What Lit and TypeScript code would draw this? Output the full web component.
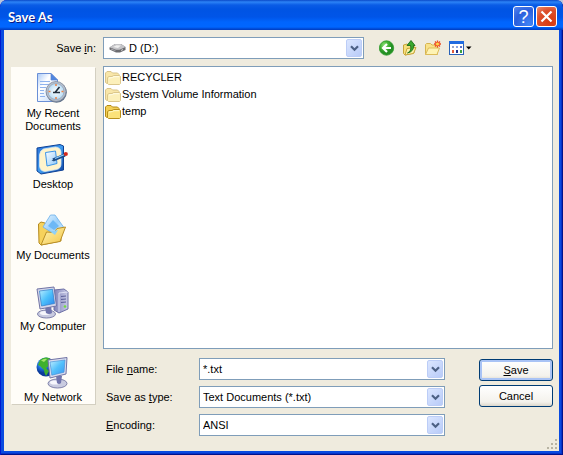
import { LitElement, html, css, svg, nothing } from "lit";
import { customElement, property } from "lit/decorators.js";

const placeIcons: Record<string, unknown> = {
  recent: svg`
    <defs>
      <linearGradient id="page" x1="0" y1="0" x2="1" y2="1"><stop offset="0" stop-color="#a9c9f7"/><stop offset=".35" stop-color="#fff"/><stop offset="1" stop-color="#bcd5fa"/></linearGradient>
      <radialGradient id="dial"><stop offset="0" stop-color="#fff"/><stop offset="1" stop-color="#b9ddf6"/></radialGradient>
    </defs>
    <path d="M0.5 1.5H14L20.5 8V29.5H0.5Z" fill="url(#page)" stroke="#6a8fd6"/>
    <path d="M14 1.5V8H20.5Z" fill="#4f86e0" stroke="#5a82cf" stroke-width=".7"/>
    <path d="M3 9.5H13M3 12.5H12M3 15.5H9M3 18.5H7M3 21.5H7M3 24.5H8" stroke="#8fb3ee"/>
    <circle cx="19.5" cy="20.5" r="10.3" fill="#5f7088"/>
    <circle cx="19" cy="19.5" r="10" fill="#b9c0cc" stroke="#7e8a9e" stroke-width=".8"/>
    <circle cx="19" cy="19.5" r="8" fill="url(#dial)" stroke="#8fa0b8" stroke-width=".7"/>
    <path d="M19 12v2M19 25v2M11.5 19.5h2M24.500 19.5h2" stroke="#f08040" stroke-width="1.5"/>
    <path d="M22.5 15L18 20.5M16 20.5H23" stroke="#22303f" stroke-width="1.6"/>`,
  desktop: svg`
    <defs>
      <linearGradient id="pad" x1="0" y1="0" x2="1" y2="1"><stop offset="0" stop-color="#2a72d8"/><stop offset=".5" stop-color="#3f9cf0"/><stop offset="1" stop-color="#0c3f9e"/></linearGradient>
      <linearGradient id="sheet" x1="0" y1="0" x2="1" y2="1"><stop offset="0" stop-color="#fff"/><stop offset="1" stop-color="#8cc8fa"/></linearGradient>
    </defs>
    <path d="M0 5L23 1.5L26.5 3V27L4 31L0 28Z" fill="url(#pad)" stroke="#0f4296"/>
    <path d="M6.500 6L18.500 4Q23.500 4.500 24 9V21Q24 25.500 19.500 26.500L8 28.500Q3 28 2.500 23V12Q3 7.500 6.500 6Z" fill="#fff4cc" stroke="#d9e6ee" stroke-width=".8"/>
    <path d="M8.5 9.5L18.5 8L20 20.500L10 23Z" fill="url(#sheet)" stroke="#3a94e8"/>
    <path d="M16 17L28 12" stroke="#174b8c" stroke-width="3"/>
    <path d="M18 15.5L27 11.8" stroke="#8fd0ff" stroke-width="1.2"/>
    <circle cx="28.8" cy="11" r="2.1" fill="#d52a1c"/>
    <path d="M14.5 18L18 15V18Z" fill="#26517f"/>`,
  documents: svg`
    <defs>
      <linearGradient id="flap" x1="0" y1="0" x2="1" y2="1"><stop offset="0" stop-color="#fff6b8"/><stop offset="1" stop-color="#f3c443"/></linearGradient>
      <linearGradient id="leaf" x1="0" y1="0" x2="1" y2="1"><stop offset="0" stop-color="#eaf6ff"/><stop offset=".5" stop-color="#9bd0fb"/><stop offset="1" stop-color="#d6eeff"/></linearGradient>
    </defs>
    <path d="M1.500 10L4 8L8 9L10 11.5L24 14V27L4 31L2 29Z" fill="#f6d25c" stroke="#b58a20"/>
    <path d="M13.500 1H18L26.5 13L20 22L6 13Z" fill="url(#leaf)" stroke="#6aaeea" stroke-width=".8"/>
    <path d="M11 12L16 6L22 12L17 16Z" fill="#6db8f6"/>
    <path d="M4 31L9.5 18L17 18.5L20 14.5L28.5 13L23 27.5Z" fill="url(#flap)" stroke="#b98f27"/>
    <path d="M13 17.500L21 16L18 21Z" fill="#8fd0f8"/>`,
  computer: svg`
    <defs>
      <linearGradient id="screen" x1="0" y1="0" x2="1" y2="1"><stop offset="0" stop-color="#bdeeff"/><stop offset=".5" stop-color="#4cc0fb"/><stop offset="1" stop-color="#2b86ee"/></linearGradient>
      <linearGradient id="tower" x1="0" x2="1"><stop offset="0" stop-color="#7f82b8"/><stop offset="1" stop-color="#c9cbe6"/></linearGradient>
    </defs>
    <path d="M17 5L27 4L31 7V24L22 28L17 25Z" fill="url(#tower)" stroke="#6d70a6"/>
    <path d="M22 8L31 7M22 8V27" stroke="#e2e4f6" stroke-width=".9"/>
    <path d="M24 11.5L29 11M24 14.5L29 14M24 17.5L29 17" stroke="#5b5f98"/>
    <circle cx="28" cy="21.5" r="1.3" fill="#6fdc3c"/>
    <ellipse cx="9.5" cy="29" rx="9" ry="4" fill="#c9cbe0" stroke="#7e80ab"/>
    <ellipse cx="8" cy="28" rx="5" ry="2" fill="#f6f6fc"/>
    <path d="M8 22L14 21L15 28Q12 30 9 28Z" fill="#7175ad"/>
    <path d="M0 4L17 2L19.500 21L3 24Z" fill="#d4d6ea" stroke="#7174a5"/>
    <path d="M2.5 6L15.500 4.3L17.500 18.5L4.5 21Z" fill="url(#screen)" stroke="#2f7bc7" stroke-width=".7"/>`,
  network: svg`
    <defs>
      <radialGradient id="globe" cx=".35" cy=".3"><stop offset="0" stop-color="#8ad2ff"/><stop offset=".6" stop-color="#1f70dc"/><stop offset="1" stop-color="#0b3a9a"/></radialGradient>
      <linearGradient id="lcd" x1="0" y1="0" x2="1" y2="1"><stop offset="0" stop-color="#c2efff"/><stop offset=".5" stop-color="#52c0fb"/><stop offset="1" stop-color="#3b96f2"/></linearGradient>
    </defs>
    <circle cx="9" cy="11" r="9.5" fill="url(#globe)"/>
    <path d="M3 4Q8 0 13 2.5L11 6L13 9L9 12L12 15L9 20Q7 17 7 14L3 10L1 9Z" fill="#3fb02e"/>
    <path d="M4 4.5Q7 2 10 3L7 6Z" fill="#a4e46a"/>
    <ellipse cx="20.5" cy="27.5" rx="9.5" ry="4.5" fill="#c9cbe0" stroke="#8183ab"/>
    <ellipse cx="18" cy="26.5" rx="5" ry="2" fill="#f7f7fd"/>
    <path d="M19 20H25L24 27Q22 29 20 27Z" fill="#7175ad"/>
    <path d="M11 4L30 1.5L29 18L13 22Z" fill="#dadcee" stroke="#7174a5"/>
    <path d="M13 6L28 4L27 16.2L14.800 19.2Z" fill="url(#lcd)" stroke="#4a93d8" stroke-width=".7"/>`,
};

const toolIcons: Record<string, unknown> = {
  back: svg`
    <defs><radialGradient id="green" cx=".35" cy=".3"><stop offset="0" stop-color="#8fe07a"/><stop offset=".6" stop-color="#42b234"/><stop offset="1" stop-color="#259024"/></radialGradient></defs>
    <circle cx="7.5" cy="8" r="7.2" fill="url(#green)" stroke="#2f9a2c" stroke-width=".8"/>
    <path d="M8 4L4 8L8 12M4.5 8H12" fill="none" stroke="#fff" stroke-width="2.2"/>`,
  up: svg`
    <path d="M1.5 5L5 4L7 5.5H12V13L3 15L1.5 13.5Z" fill="#f7e07c" stroke="#c8a437"/>
    <path d="M3 15L5 8.5L14 7.500L11.5 13.5Z" fill="#fdf2a8" stroke="#c8a437"/>
    <path d="M5.5 13Q10 11 8.500 5.5H5L9 0.5L13 5.5H11.500Q12 11.500 5.500 13Z" fill="#39a82e" stroke="#1b6e1a" stroke-width=".9"/>`,
  folder: svg`
    <path d="M0.5 4.5L1.5 3.5H5.500L7 5H12.500V14.5H0.5Z" fill="#f8e28a" stroke="#d6b450"/>
    <path d="M0.5 14.5L3.500 8H14.500L12 14.500Z" fill="#fef3b4" stroke="#dcbb58"/>
    <path d="M12.5 0.500V7.500M9 4H16M10 1.500L15 6.500M15 1.500L10 6.500" stroke="#ec4a20" stroke-width="1.300"/>
    <circle cx="12.5" cy="4" r="1.5" fill="#ffd94a"/>`,
  views: svg`
    <rect x=".5" y="1.5" width="14" height="13" fill="#fff" stroke="#2a62b8"/>
    <rect x="0" y="1" width="15" height="3" fill="#1f6be0"/>
    <path d="M3 7h2" stroke="#9aa8c8" stroke-width="2"/><path d="M7 7h2" stroke="#8aa4e0" stroke-width="2"/><path d="M11 7h2" stroke="#5a70c8" stroke-width="2"/>
    <path d="M3 11.5h2" stroke="#e05a3c" stroke-width="3"/><path d="M7 11.5h2" stroke="#20308c" stroke-width="3"/><path d="M11 11.5h2" stroke="#3ea040" stroke-width="3"/>
    <path d="M17 6.5h5.5l-2.750 3z" fill="#000"/>`,
};

const base = css`
  * { box-sizing: border-box; }
  svg { display: block; flex: none; }
  button, input, select { font: inherit; color: inherit; margin: 0; }
`;

/** White field with a drop-down arrow at its right end. */
@customElement("xp-combo")
export class XpCombo extends LitElement {
  @property() value = "";
  @property() label = "";
  @property({ type: Boolean }) editable = false;
  @property({ type: Boolean }) drive = false;

  static styles = [base, css`
    :host { display: block; min-width: 0; }
    .box { display: flex; align-items: center; height: 22px; padding: 1px; border: 1px solid #7f9db9; background: #fff; }
    .field { flex: 1; min-width: 0; width: 0; height: 18px; padding: 0 2px; border: 0; outline: 0; background: transparent; appearance: none; line-height: 18px; }
    .drive { margin: 0 1px 0 4px; }
    .arrow { flex: none; display: grid; place-items: center; width: 16px; height: 18px; padding: 0; border: 1px solid #bccdf7; border-radius: 2px; background: linear-gradient(135deg, #dbe6ff, #b8cbf8); }
  `];

  render() {
    return html`<div class="box">
      ${this.drive ? html`<svg class="drive" width="17" height="16" viewBox="0 0 17 16" aria-hidden="true">
        <path d="M0.5 7.5L6 4H12L16.5 7V10L11 12.500H7L0.5 9.5Z" fill="#6c6c70"/>
        <path d="M0.5 7.3L6 4H12L16.5 7L10.5 9.8H7Z" fill="#c4c4c8"/>
        <path d="M4 7L7.5 5.2L12 5.5L9 8Z" fill="#efefef"/>
        <path d="M2 9L6.5 10.7" stroke="#a8a8ac"/><path d="M12 10.5L14 9.5" stroke="#d0d0d0"/>
      </svg>` : nothing}
      ${this.editable
        ? html`<input class="field" type="text" aria-label=${this.label} .value=${this.value}>`
        : html`<select class="field" aria-label=${this.label}><option selected>${this.value}</option></select>`}
      <button class="arrow" type="button" tabindex="-1" aria-label="Show list">
        <svg width="9" height="7" viewBox="0 0 9 7"><path d="M1 1.2L4.5 4.7L8 1.2" fill="none" stroke="#4d6185" stroke-width="2.2"/></svg>
      </button>
    </div>`;
  }
}

@customElement("app-root")
export class AppRoot extends LitElement {
  private places = [
    { icon: "recent", text: "My Recent Documents" },
    { icon: "desktop", text: "Desktop" },
    { icon: "documents", text: "My Documents" },
    { icon: "computer", text: "My Computer" },
    { icon: "network", text: "My Network" },
  ];
  private files = [
    { name: "RECYCLER", hidden: true },
    { name: "System Volume Information", hidden: true },
    { name: "temp", hidden: false },
  ];
  private tools = [
    { id: "back", label: "Back", width: 16 },
    { id: "up", label: "Up one level", width: 16 },
    { id: "folder", label: "Create new folder", width: 17 },
    { id: "views", label: "Views", width: 23 },
  ];

  static styles = [base, css`
    :host { display: block; background: #b9c6dc; font: 11px/13px "Liberation Sans", Arial, sans-serif; color: #000; }
    .window { display: flex; flex-direction: column; min-height: 100vh; padding: 0 4px 4px; border-radius: 7px 7px 0 0; overflow: hidden;
      background: #0a4be0; box-shadow: inset 1px 0 #0019cf, inset -1px -1px #00138c, inset -2px -2px #0733c9; }
    .title { display: flex; align-items: center; gap: 2px; height: 30px; margin: 0 -4px; padding: 3px 6px 0 8px; border-radius: 7px 7px 0 0;
      background: linear-gradient(#0a49c8 0, #2c83f6 2px, #0a5ce6 5px, #0054e3 9px, #0055e8 17px, #0065fd 22px, #0066ff 27px, #0047d0 29px, #003cc0 30px); }
    h1 { flex: 1; margin: 0; font: bold 13px/16px Lato, sans-serif; color: #fff; text-shadow: 1px 1px #0a1883; }
    .cap { display: grid; place-items: center; width: 21px; height: 21px; padding: 0; border: 1px solid #fff; border-radius: 3px; color: #fff; font: 18px/18px "Liberation Sans", sans-serif; }
    .help { background: radial-gradient(circle at 80% 90%, #3f83f5, #2b5fdc 60%, #5686ee); }
    .close { background: radial-gradient(circle at 70% 80%, #d93a0e, #dc4f2c 60%, #ee9070); }
    .body { flex: 1; position: relative; display: grid; grid-template-columns: 86px minmax(0, 1fr); grid-template-rows: 22px 1fr auto; column-gap: 6px; padding: 7px 6px 15px 7px; background: #efebde; }
    .lookin { align-self: center; justify-self: end; padding-right: 1px; }
    .top { display: flex; }
    .drive { flex: 1; }
    .tools { flex: none; display: flex; align-items: center; gap: 7px; width: 189px; padding-left: 15px; }
    .tool { padding: 0; border: 0; background: none; }
    .places { grid-row: 2 / 4; align-self: start; margin: 8px 2px 0 0; padding-top: 5px; background: #fffdf8; box-shadow: 1px 1px #d3cfc1; }
    .place { display: flex; flex-direction: column; align-items: center; gap: 3px; width: 100%; height: 71px; padding: 0 12px; border: 0; background: none; text-align: center; line-height: 13px; }
    .place:last-child { height: auto; }
    .place span { margin: 0 -10px; }
    .place:first-child span { margin: 0; }
    .files { margin: 7px 0 9px; padding: 2px 1px; border: 1px solid #7f9db9; background: #fff; list-style: none; }
    .file { display: flex; align-items: center; gap: 1px; height: 17px; }
    .hidden svg { opacity: .5; }
    .form { display: flex; gap: 34px; }
    .fields { flex: 1; display: grid; grid-template-columns: 93px minmax(0, 1fr); grid-auto-rows: 22px; row-gap: 6px; align-items: center; padding-left: 3px; }
    .buttons { flex: none; display: flex; flex-direction: column; gap: 4px; width: 74px; padding-top: 1px; }
    .push { height: 22px; padding: 0; border: 1px solid #003c74; border-radius: 3px; background: linear-gradient(#fff, #f4f2ec 80%, #dcd7cb); }
    .default { box-shadow: inset 0 0 0 2px #a9c3f5; }
    .grip { position: absolute; right: 1px; bottom: 1px; }
  `];

  render() {
    return html`<main class="window">
      <header class="title">
        <h1>Save As</h1>
        <button class="cap help" aria-label="Help">?</button>
        <button class="cap close" aria-label="Close"><svg width="13" height="13" viewBox="0 0 13 13"><path d="M1.5 1.5L11.5 11.5M11.5 1.5L1.5 11.5" stroke="#fff" stroke-width="2.2"/></svg></button>
      </header>
      <div class="body">
        <span class="lookin">Save <u>i</u>n:</span>
        <div class="top">
          <xp-combo class="drive" drive label="Save in" value="D (D:)"></xp-combo>
          <div class="tools">${this.tools.map((t) => html`<button class="tool" aria-label=${t.label}>
            <svg width=${t.width} height="16" viewBox="0 0 ${t.width} 16">${toolIcons[t.id]}</svg></button>`)}</div>
        </div>
        <nav class="places">${this.places.map((p) => html`<button class="place">
          <svg width="32" height="32" viewBox="0 0 32 32" overflow="visible">${placeIcons[p.icon]}</svg><span>${p.text}</span></button>`)}</nav>
        <ul class="files">${this.files.map((f) => html`<li class="file ${f.hidden ? "hidden" : ""}">
          <svg width="16" height="16" viewBox="0 0 16 16">
            <path d="M0.5 12.5V3L2 1.500H6L7.500 3H12.5L14 4.500V13L2 13.500Z" fill="#f3cf55" stroke="#b48b18"/>
            <path d="M3.5 14.5L2.5 13.500V7.500L4 6.500H7L8.5 5.500H14.500L15.500 6.500V13.5L14.500 14.5Z" fill="#fbe27a" stroke="#b8901c"/>
            <path d="M4 8L7.5 7.500L9 6.700H14" fill="none" stroke="#fffbd0"/>
          </svg><span>${f.name}</span></li>`)}</ul>
        <form class="form" @submit=${(e: Event) => e.preventDefault()}>
          <div class="fields">
            <span>File <u>n</u>ame:</span><xp-combo editable label="File name" value="*.txt"></xp-combo>
            <span>Save as <u>t</u>ype:</span><xp-combo label="Save as type" value="Text Documents (*.txt)"></xp-combo>
            <span><u>E</u>ncoding:</span><xp-combo label="Encoding" value="ANSI"></xp-combo>
          </div>
          <div class="buttons">
            <button class="push default" type="submit"><u>S</u>ave</button>
            <button class="push" type="button">Cancel</button>
          </div>
        </form>
        <svg class="grip" width="12" height="12" viewBox="0 0 12 12" aria-hidden="true">
          <path d="M9 2h2M5 6h2M9 6h2M1 10h2M5 10h2M9 10h2" stroke="#b8b4a3" stroke-width="2"/>
        </svg>
      </div>
    </main>`;
  }
}
